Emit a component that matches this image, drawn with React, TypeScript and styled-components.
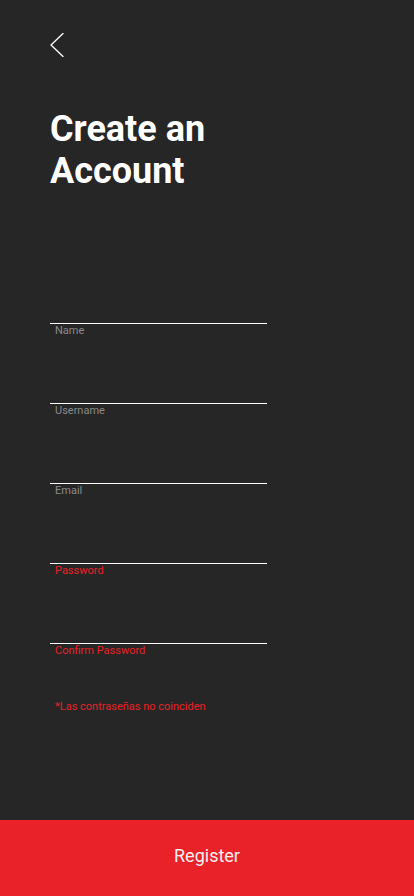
import React, { useState } from "react";
import styled, { createGlobalStyle } from "styled-components";

const colors = {
  bg: "#262626",
  red: "#e82228",
  label: "#8a8a8a",
  line: "#ffffff",
};

const GlobalStyle = createGlobalStyle`
  * { box-sizing: border-box; }
  html, body {
    margin: 0;
    padding: 0;
    background: ${colors.bg};
    font-family: Roboto, "Liberation Sans", sans-serif;
  }
`;

const Page = styled.div`
  min-height: 100vh;
  display: flex;
  flex-direction: column;
  background: ${colors.bg};
`;

const Content = styled.div`
  padding: 33px 50px 0;
  display: flex;
  flex-direction: column;
`;

const BackButton = styled.button`
  width: 14px;
  height: 24px;
  padding: 0;
  border: none;
  background: none;
  cursor: pointer;
  display: block;
  svg {
    display: block;
  }
`;

const Title = styled.h1`
  margin: 51px 0 0;
  color: #fff;
  font-size: 36px;
  font-weight: 700;
  line-height: 42px;
`;

const Form = styled.form`
  margin-top: 92px;
  width: 217px;
  display: flex;
  flex-direction: column;
`;

const Field = styled.div`
  height: 80px;
  display: flex;
  flex-direction: column;
`;

const Input = styled.input`
  height: 40px;
  width: 100%;
  border: none;
  border-bottom: 1px solid ${colors.line};
  background: transparent;
  color: #fff;
  font-family: inherit;
  font-size: 14px;
  outline: none;
  padding: 0 5px;
`;

const Label = styled.label<{ $error?: boolean }>`
  padding-left: 5px;
  font-size: 11px;
  line-height: 13px;
  color: ${(p) => (p.$error ? colors.red : colors.label)};
`;

const ErrorText = styled.p`
  margin: 16px 0 0 5px;
  font-size: 11px;
  line-height: 13px;
  color: ${colors.red};
`;

const RegisterButton = styled.button`
  margin-top: auto;
  height: 76px;
  width: 100%;
  border: none;
  padding: 0 0 6px;
  background: ${colors.red};
  color: #f8f0f0;
  font-family: inherit;
  font-size: 18px;
  cursor: pointer;
`;

const fields = [
  { id: "name", label: "Name", type: "text" },
  { id: "username", label: "Username", type: "text" },
  { id: "email", label: "Email", type: "email" },
  { id: "password", label: "Password", type: "password" },
  { id: "confirm", label: "Confirm Password", type: "password" },
];

const App: React.FC = () => {
  const [values, setValues] = useState<Record<string, string>>({});
  const mismatch = true;

  return (
    <Page>
      <GlobalStyle />
      <Content>
        <BackButton aria-label="Back">
          <svg width="14" height="24" viewBox="0 0 14 24" fill="none">
            <polyline
              points="13,0.5 1,12 13,23.5"
              stroke="#fff"
              strokeWidth="1.3"
              strokeLinecap="round"
              strokeLinejoin="round"
            />
          </svg>
        </BackButton>
        <Title>
          Create an
          <br />
          Account
        </Title>
        <Form onSubmit={(e) => e.preventDefault()}>
          {fields.map((f) => (
            <Field key={f.id}>
              <Input
                id={f.id}
                type={f.type}
                value={values[f.id] || ""}
                onChange={(e) => setValues({ ...values, [f.id]: e.target.value })}
              />
              <Label htmlFor={f.id} $error={mismatch && f.type === "password"}>
                {f.label}
              </Label>
            </Field>
          ))}
          {mismatch && <ErrorText>*Las contraseñas no coinciden</ErrorText>}
        </Form>
      </Content>
      <RegisterButton>Register</RegisterButton>
    </Page>
  );
};

export default App;
